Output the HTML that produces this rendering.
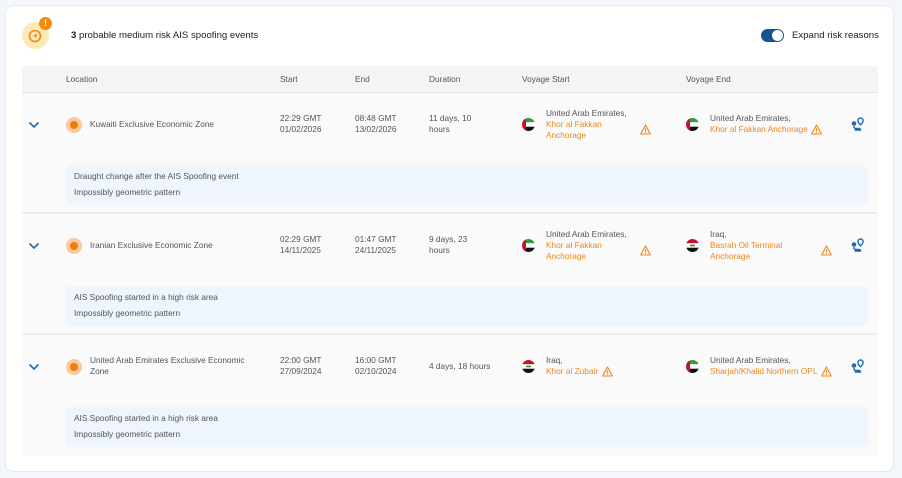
<!DOCTYPE html>
<html><head><meta charset="utf-8"><style>
*{box-sizing:border-box;margin:0;padding:0}
body{width:902px;height:478px;background:#f3f7fb;font-family:"Liberation Sans",sans-serif;position:relative;overflow:hidden;color:#555}
.card{position:absolute;left:5px;top:5px;width:889px;height:467px;background:#fff;border:1px solid #e6e9ee;border-radius:8px}
.abs{position:absolute}
.t{font-size:8.3px;line-height:11px;color:#555}
.o{color:#f0861a}
.hdr{position:absolute;left:22px;top:66px;width:856px;height:27px;background:#f4f4f4;border-bottom:1px solid #e6e6e6}
.row{position:absolute;left:22px;width:856px;height:121px;background:#fafafa;border-bottom:2px solid #ececec}
.box{position:absolute;left:44px;top:72px;width:802px;height:40px;background:#eef5fc;border-radius:5px}
</style></head><body>
<div class="card"></div>
<div class="abs" style="left:22px;top:22px;width:27px;height:27px;border-radius:50%;background:#fde9b8"></div>
<svg class="abs" style="left:27px;top:27px" width="17" height="17" viewBox="0 0 17 17"><circle cx="8" cy="9" r="5.5" fill="none" stroke="#f0861a" stroke-width="1.6"/><path d="M5.5 9 L10.5 6.5 L8.5 11.5 L8 9.5Z" fill="#f0861a"/></svg>
<div class="abs" style="left:39px;top:17px;width:13px;height:13px;border-radius:50%;background:#f58a0c;color:#fff;font-size:9px;font-weight:bold;text-align:center;line-height:13px">!</div>
<div class="abs" style="left:71px;top:30px;font-size:9.6px;color:#222"><b>3</b> probable medium risk AIS spoofing events</div>
<div class="abs" style="left:761px;top:29px;width:23px;height:13px;border-radius:7px;background:#16558f"></div>
<div class="abs" style="left:772px;top:30px;width:11px;height:11px;border-radius:50%;background:#fff"></div>
<div class="abs" style="left:792px;top:30px;font-size:9.6px;color:#222">Expand risk reasons</div>

<div class="hdr"></div>
<div class="abs t" style="left:66px;top:74px">Location</div>
<div class="abs t" style="left:280px;top:74px">Start</div>
<div class="abs t" style="left:355px;top:74px">End</div>
<div class="abs t" style="left:429px;top:74px">Duration</div>
<div class="abs t" style="left:522px;top:74px">Voyage Start</div>
<div class="abs t" style="left:686px;top:74px">Voyage End</div>

<div class="row" style="top:93px"><div class="box"></div></div>
<div class="row" style="top:214px"><div class="box"></div></div>
<div class="row" style="top:335px;border-bottom:none"><div class="box"></div></div>

<svg class="abs" style="left:28px;top:121px" width="12" height="8"><path d="M1.5 1.5 L6 6 L10.5 1.5" stroke="#1f6bb0" stroke-width="1.6" fill="none"/></svg>
<div class="abs" style="left:66px;top:117px;width:16px;height:16px;border-radius:50%;background:#f9c9a0"></div><div class="abs" style="left:70px;top:121px;width:8px;height:8px;border-radius:50%;background:#f07d0a"></div>
<div class="abs t" style="left:90px;top:119px">Kuwaiti Exclusive Economic Zone</div>
<div class="abs t" style="left:280px;top:113px">22:29 GMT<br>01/02/2026</div>
<div class="abs t" style="left:355px;top:113px">08:48 GMT<br>13/02/2026</div>
<div class="abs t" style="left:429px;top:113px">11 days, 10<br>hours</div>
<div class="abs t" style="left:546px;top:108px">United Arab Emirates,<br><span class="o">Khor al Fakkan<br>Anchorage</span></div>
<div class="abs t" style="left:710px;top:113px">United Arab Emirates,<br><span class="o">Khor al Fakkan Anchorage</span></div>
<div class="abs t" style="left:74px;top:171px">Draught change after the AIS Spoofing event</div>
<div class="abs t" style="left:74px;top:187px">Impossibly geometric pattern</div>

<svg class="abs" style="left:28px;top:242px" width="12" height="8"><path d="M1.5 1.5 L6 6 L10.5 1.5" stroke="#1f6bb0" stroke-width="1.6" fill="none"/></svg>
<div class="abs" style="left:66px;top:238px;width:16px;height:16px;border-radius:50%;background:#f9c9a0"></div><div class="abs" style="left:70px;top:242px;width:8px;height:8px;border-radius:50%;background:#f07d0a"></div>
<div class="abs t" style="left:90px;top:240px">Iranian Exclusive Economic Zone</div>
<div class="abs t" style="left:280px;top:234px">02:29 GMT<br>14/11/2025</div>
<div class="abs t" style="left:355px;top:234px">01:47 GMT<br>24/11/2025</div>
<div class="abs t" style="left:429px;top:234px">9 days, 23<br>hours</div>
<div class="abs t" style="left:546px;top:229px">United Arab Emirates,<br><span class="o">Khor al Fakkan<br>Anchorage</span></div>
<div class="abs t" style="left:710px;top:229px">Iraq,<br><span class="o">Basrah Oil Terminal<br>Anchorage</span></div>
<div class="abs t" style="left:74px;top:292px">AIS Spoofing started in a high risk area</div>
<div class="abs t" style="left:74px;top:308px">Impossibly geometric pattern</div>

<svg class="abs" style="left:28px;top:363px" width="12" height="8"><path d="M1.5 1.5 L6 6 L10.5 1.5" stroke="#1f6bb0" stroke-width="1.6" fill="none"/></svg>
<div class="abs" style="left:66px;top:359px;width:16px;height:16px;border-radius:50%;background:#f9c9a0"></div><div class="abs" style="left:70px;top:363px;width:8px;height:8px;border-radius:50%;background:#f07d0a"></div>
<div class="abs t" style="left:90px;top:355px">United Arab Emirates Exclusive Economic<br>Zone</div>
<div class="abs t" style="left:280px;top:355px">22:00 GMT<br>27/09/2024</div>
<div class="abs t" style="left:355px;top:355px">16:00 GMT<br>02/10/2024</div>
<div class="abs t" style="left:429px;top:361px">4 days, 18 hours</div>
<div class="abs t" style="left:546px;top:355px">Iraq,<br><span class="o">Khor al Zubair</span></div>
<div class="abs t" style="left:710px;top:355px">United Arab Emirates,<br><span class="o">Sharjah/Khalid Northern OPL</span></div>
<div class="abs t" style="left:74px;top:413px">AIS Spoofing started in a high risk area</div>
<div class="abs t" style="left:74px;top:429px">Impossibly geometric pattern</div>

<svg width="0" height="0" style="position:absolute"><defs>
<g id="uae"><rect x="0" y="0" width="13" height="4.3" fill="#3a9a3a"/><rect x="0" y="4.3" width="13" height="4.4" fill="#fff"/><rect x="0" y="8.7" width="13" height="4.3" fill="#111"/><rect x="0" y="0" width="4" height="13" fill="#c8102e"/></g>
<g id="iraq"><rect x="0" y="0" width="13" height="4.3" fill="#c8102e"/><rect x="0" y="4.3" width="13" height="4.4" fill="#fff"/><rect x="0" y="8.7" width="13" height="4.3" fill="#111"/><rect x="4" y="5.7" width="5" height="1.6" fill="#3a8a3a"/></g>
<g id="warn"><path d="M5.5 1 L10.3 10 H0.7Z" fill="none" stroke="#f0861a" stroke-width="1.1" stroke-linejoin="round"/><path d="M5.5 4.3 V7" stroke="#f0861a" stroke-width="1.1"/><circle cx="5.5" cy="8.4" r=".6" fill="#f0861a"/></g>
<g id="route"><path d="M9.5 1 a2.6 2.6 0 0 1 2.6 2.6 c0 1.8 -2.6 4.2 -2.6 4.2 s-2.6 -2.4 -2.6 -4.2 a2.6 2.6 0 0 1 2.6 -2.6z" fill="none" stroke="#1f6bb0" stroke-width="1.4"/><circle cx="3" cy="6.5" r="2.3" fill="#1f6bb0"/><path d="M3 9 V10 Q3 11.5 5 11.5 H7.5 Q9.5 11.5 9.5 13 H3.5" fill="none" stroke="#1f6bb0" stroke-width="1.4"/></g>
<clipPath id="c"><circle cx="6.5" cy="6.5" r="6.5"/></clipPath>
</defs></svg>
<svg class="abs" style="left:522px;top:118px" width="13" height="13"><g clip-path="url(#c)"><use href="#uae"/></g></svg>
<svg class="abs" style="left:686px;top:118px" width="13" height="13"><g clip-path="url(#c)"><use href="#uae"/></g></svg>
<svg class="abs" style="left:522px;top:239px" width="13" height="13"><g clip-path="url(#c)"><use href="#uae"/></g></svg>
<svg class="abs" style="left:686px;top:239px" width="13" height="13"><g clip-path="url(#c)"><use href="#iraq"/></g></svg>
<svg class="abs" style="left:522px;top:360px" width="13" height="13"><g clip-path="url(#c)"><use href="#iraq"/></g></svg>
<svg class="abs" style="left:686px;top:360px" width="13" height="13"><g clip-path="url(#c)"><use href="#uae"/></g></svg>
<svg class="abs" style="left:640px;top:124px" width="11" height="11"><use href="#warn"/></svg>
<svg class="abs" style="left:811px;top:124px" width="11" height="11"><use href="#warn"/></svg>
<svg class="abs" style="left:640px;top:245px" width="11" height="11"><use href="#warn"/></svg>
<svg class="abs" style="left:821px;top:245px" width="11" height="11"><use href="#warn"/></svg>
<svg class="abs" style="left:602px;top:366px" width="11" height="11"><use href="#warn"/></svg>
<svg class="abs" style="left:821px;top:366px" width="11" height="11"><use href="#warn"/></svg>
<svg class="abs" style="left:851px;top:117px" width="14" height="15"><use href="#route"/></svg>
<svg class="abs" style="left:851px;top:238px" width="14" height="15"><use href="#route"/></svg>
<svg class="abs" style="left:851px;top:359px" width="14" height="15"><use href="#route"/></svg>
</body></html>
